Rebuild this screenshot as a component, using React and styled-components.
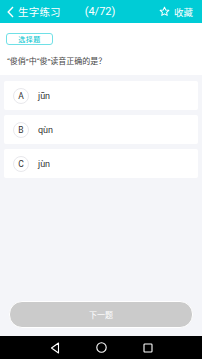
import React from 'react';
import styled, { createGlobalStyle } from 'styled-components';

const GlobalStyle = createGlobalStyle`
  html, body {
    margin: 0;
    padding: 0;
    background: #f4f5f9;
    font-family: "Noto Sans CJK SC", Roboto, "Noto Sans", sans-serif;
  }
`;

const options = [
  { key: 'A', text: 'jūn' },
  { key: 'B', text: 'qùn' },
  { key: 'C', text: 'jùn' },
];

const App = () => {
  return (
    <Page>
      <GlobalStyle />
      <Header>
        <Back>
          <svg width="7" height="12" viewBox="0 0 7 12">
            <path d="M6 1 L1.2 6 L6 11" fill="none" stroke="#fff" strokeWidth="1.4" />
          </svg>
          <Title>生字练习</Title>
        </Back>
        <Count>(4/72)</Count>
        <Fav>
          <svg width="11" height="11" viewBox="0 0 24 24">
            <path
              d="M12 2.5 L14.9 8.6 L21.5 9.4 L16.6 13.9 L17.9 20.5 L12 17.2 L6.1 20.5 L7.4 13.9 L2.5 9.4 L9.1 8.6 Z"
              fill="none"
              stroke="#fff"
              strokeWidth="2.2"
              strokeLinejoin="round"
            />
          </svg>
          <span>收藏</span>
        </Fav>
      </Header>
      <QuestionBox>
        <Badge>选择题</Badge>
        <Question>“俊俏”中“俊”读音正确的是？</Question>
      </QuestionBox>
      <Options>
        {options.map((o) => (
          <Option key={o.key}>
            <Letter>{o.key}</Letter>
            <Pinyin>{o.text}</Pinyin>
          </Option>
        ))}
      </Options>
      <Spacer />
      <ButtonRow>
        <NextButton>下一题</NextButton>
      </ButtonRow>
      <NavBar>
        <svg width="10" height="12" viewBox="0 0 10 12">
          <path d="M8.5 1 L1.5 6 L8.5 11 Z" fill="none" stroke="#fff" strokeWidth="1.1" strokeLinejoin="round" />
        </svg>
        <svg width="11" height="11" viewBox="0 0 11 11">
          <circle cx="5.5" cy="5.5" r="4.7" fill="none" stroke="#fff" strokeWidth="1.1" />
        </svg>
        <svg width="10" height="10" viewBox="0 0 10 10">
          <rect x="1" y="1" width="8" height="8" rx="0.8" fill="none" stroke="#fff" strokeWidth="1.1" />
        </svg>
      </NavBar>
    </Page>
  );
};

export default App;

const Page = styled.div`
  width: 202px;
  height: 359px;
  display: flex;
  flex-direction: column;
  background: #f4f5f9;
  overflow: hidden;
`;

const Header = styled.div`
  height: 23px;
  background: #00ccd6;
  color: #fff;
  display: flex;
  align-items: center;
  padding: 0 9px 0 7px;
`;

const Back = styled.div`
  display: flex;
  align-items: center;
  gap: 4px;
  width: 70px;
`;

const Title = styled.span`
  font-size: 10.5px;
  letter-spacing: 0.2px;
`;

const Count = styled.span`
  flex: 1;
  text-align: center;
  font-family: Roboto, "Noto Sans", sans-serif;
  font-size: 11px;
  margin-right: 36px;
`;

const Fav = styled.div`
  display: flex;
  align-items: center;
  gap: 4px;
  font-size: 9.5px;
`;

const QuestionBox = styled.div`
  background: #fff;
  padding: 10px 6px 0;
  height: 52px;
  box-sizing: border-box;
`;

const Badge = styled.div`
  width: 47px;
  height: 12px;
  box-sizing: border-box;
  border: 1px solid #6fe0e6;
  border-radius: 3px;
  color: #00c4ce;
  font-size: 7px;
  display: flex;
  align-items: center;
  justify-content: center;
  letter-spacing: 0.5px;
`;

const Question = styled.div`
  margin-top: 10px;
  font-family: Roboto, "Noto Sans CJK SC", sans-serif;
  font-size: 8px;
  color: #444;
  padding-left: 1px;
`;

const Options = styled.div`
  display: flex;
  flex-direction: column;
  gap: 5px;
  padding: 6px 4px 0;
`;

const Option = styled.div`
  height: 29px;
  background: #fff;
  border-radius: 2px;
  display: flex;
  align-items: center;
  padding-left: 9px;
`;

const Letter = styled.div`
  width: 16px;
  height: 16px;
  box-sizing: border-box;
  border: 1px solid #e8e8ec;
  border-radius: 50%;
  display: flex;
  align-items: center;
  justify-content: center;
  font-family: Roboto, "Noto Sans", sans-serif;
  font-size: 8.5px;
  color: #333;
`;

const Pinyin = styled.span`
  margin-left: 9px;
  font-family: Roboto, "Noto Sans", sans-serif;
  font-size: 9px;
  color: #333;
`;

const Spacer = styled.div`
  flex: 1;
`;

const ButtonRow = styled.div`
  padding: 0 9px 8px;
`;

const NextButton = styled.div`
  height: 25px;
  border-radius: 13px;
  background: #cbcbcb;
  border: 1px solid #fff;
  color: #fff;
  font-size: 8px;
  display: flex;
  align-items: center;
  justify-content: center;
`;

const NavBar = styled.div`
  height: 23px;
  background: #000;
  display: flex;
  align-items: center;
  justify-content: center;
  gap: 36px;
`;
